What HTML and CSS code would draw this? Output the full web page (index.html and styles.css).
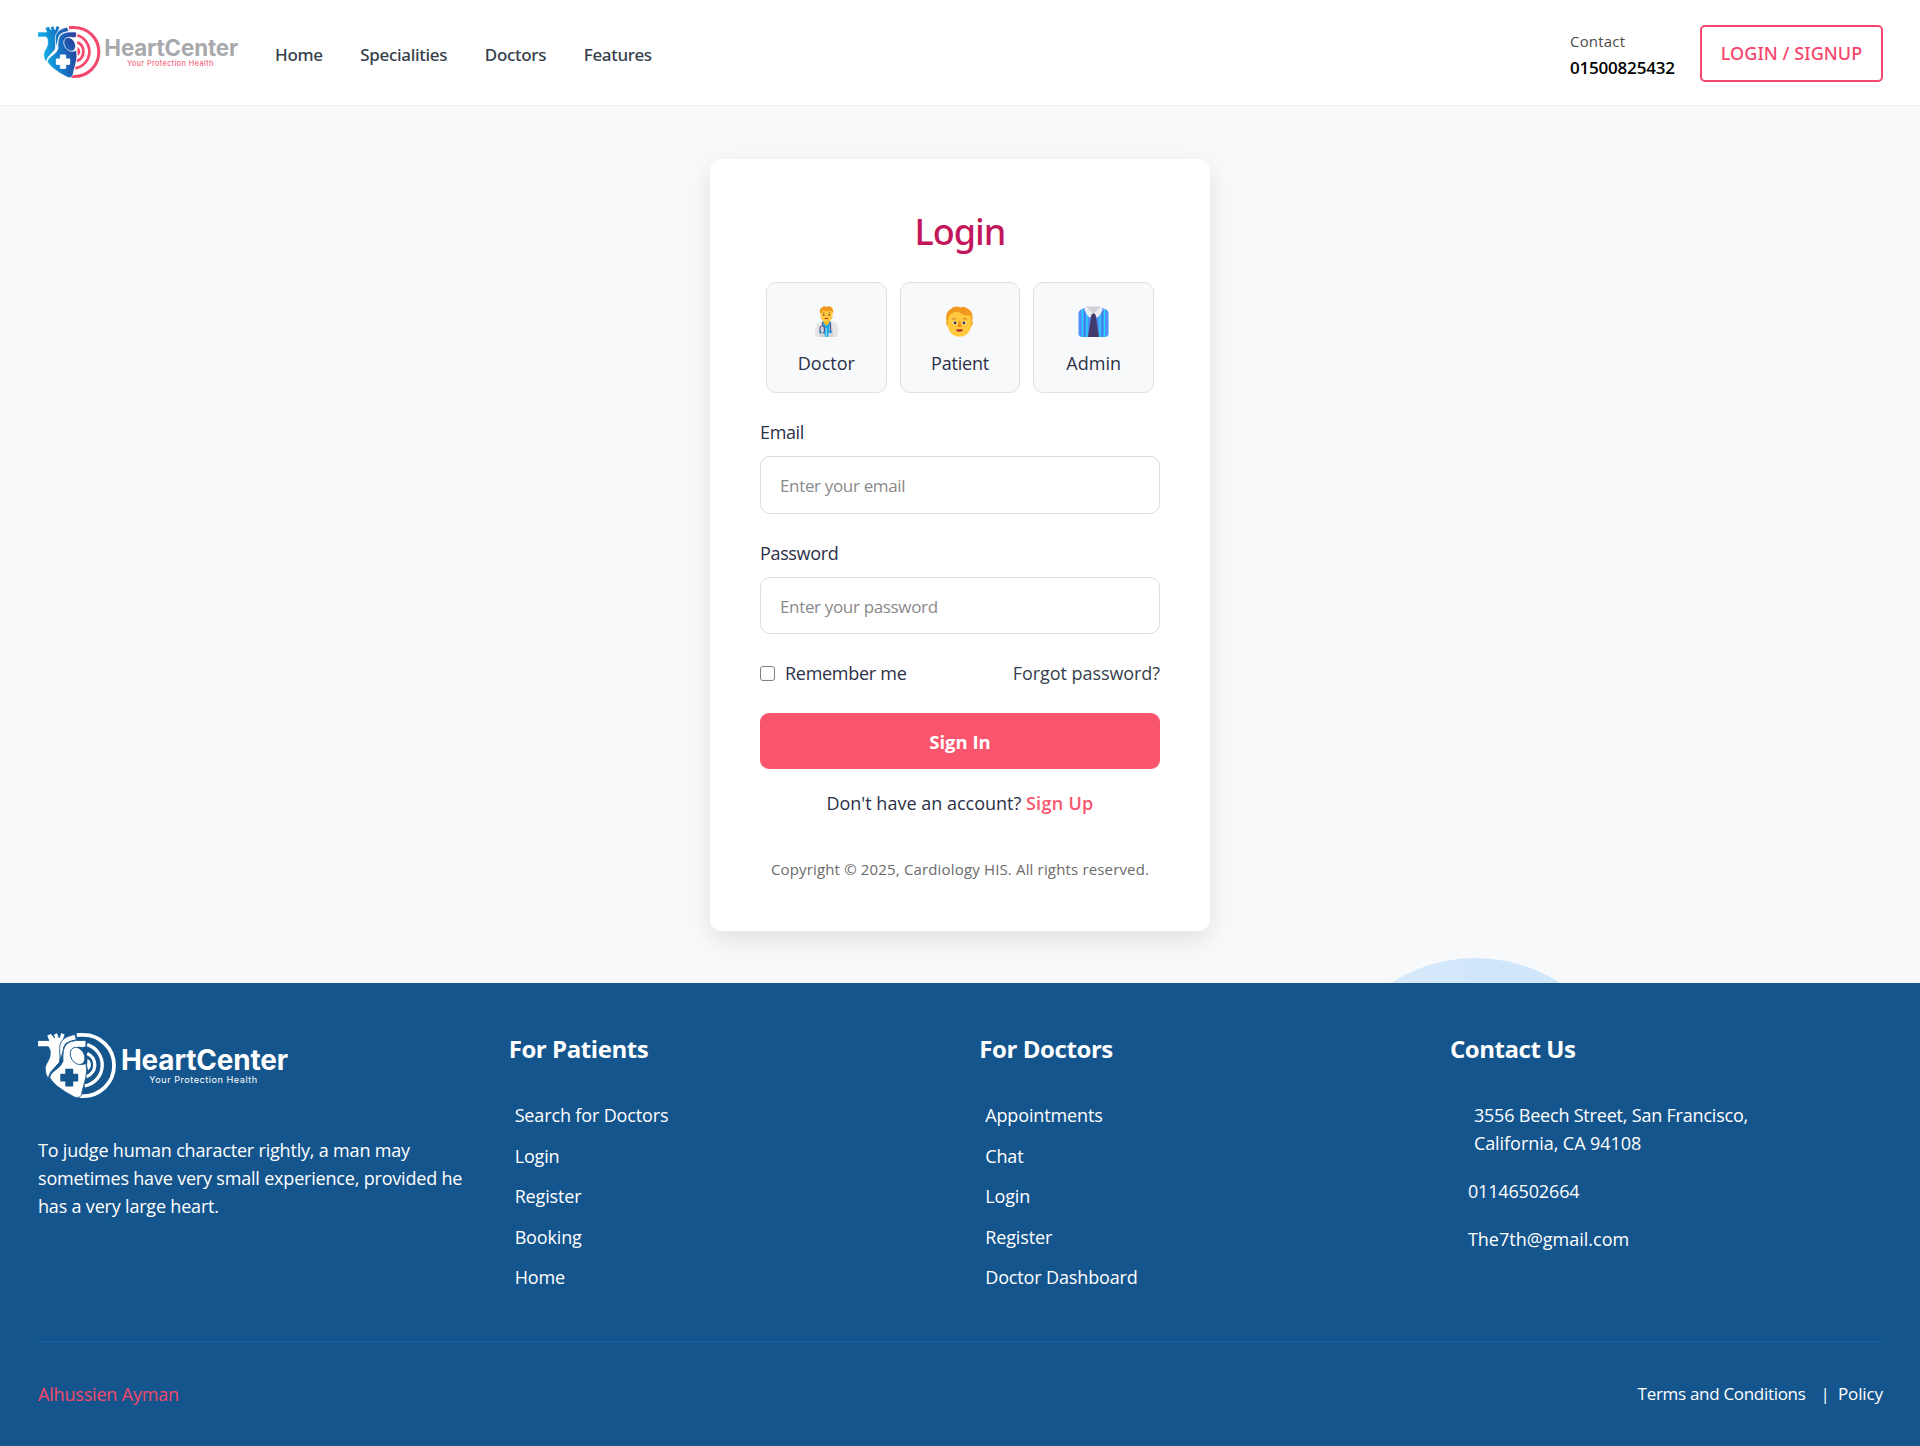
FILE: index.html
```
<!DOCTYPE html>
<html lang="en">
<head>
<meta charset="utf-8">
<title>HeartCenter - Login</title>
<link rel="stylesheet" href="styles.css">
</head>
<body>
<svg class="defs" width="0" height="0" aria-hidden="true">
  <defs>
    <linearGradient id="heart-blue" gradientUnits="userSpaceOnUse" x1="74" y1="130" x2="170" y2="112">
      <stop offset="0" stop-color="#0fa9e6"/>
      <stop offset=".5" stop-color="#1673c2"/>
      <stop offset="1" stop-color="#2a3f9d"/>
    </linearGradient>
    <symbol id="logo" viewBox="54 48 600 156">
      <g class="rings" fill="none">
        <path stroke-width="9" d="M147 53C152 52.500 158 52 163 52.500A73.500 73.500 0 0 1 163 199.500C160 199.500 157 199.500 154 199"/>
        <path stroke-width="8" d="M172 76A51 51 0 0 1 166 175"/>
        <path stroke-width="8" d="M172 97A30 30 0 0 1 170 153"/>
      </g>
      <path class="ring-core" d="M173 110Q182 117 181 126Q180 134 174 138Q170 124 173 110Z"/>
      <g class="heart">
        <path d="M53 66H80L75 54L85 49L94 60L91 52L100 47L105 60L109 47L119 51L114 66Q107 76 107 92Q108 110 105 119L84 142L78 157Q71 146 71 132Q73 122 79 114Q85 104 83 90L79 81H53Z"/>
        <path d="M108 72Q116 58 130 55L142 51L146 64Q128 67 120 74Q114 82 114 92L108 112Q104 84 108 72Z"/>
        <path d="M121 76Q130 67 146 66H169V81L160 83Q150 79 143 86Q138 94 141 106Q146 118 152 122Q160 126 169 121Q173 140 168 158Q161 182 158 198Q152 206 142 202Q118 190 98 174Q85 162 82 154Q84 146 92 140Q110 128 114 116Q112 88 121 76Z"/>
        <ellipse cx="149" cy="103" rx="16" ry="22" transform="rotate(-30 149 103)"/>
      </g>
      <path class="cross" d="M121 135h16v12h12v16h-12v12h-16v-12h-12v-16h12z"/>
      <text class="logo-name" x="253" y="137" textLength="401">HeartCenter</text>
      <text class="logo-tag" x="321" y="168" textLength="259">Your Protection Health</text>
    </symbol>
  </defs>
</svg>

<header class="header">
  <a class="brand"><svg class="logo logo-color" width="200" height="52"><use href="#logo"/></svg></a>
  <nav class="nav">
    <a>Home</a><a>Specialities</a><a>Doctors</a><a>Features</a>
  </nav>
  <div class="header-contact">
    <span class="contact-label">Contact</span>
    <span class="contact-phone">01500825432</span>
  </div>
  <a class="login-btn">LOGIN / SIGNUP</a>
</header>

<main class="main">
  <div class="bubble"></div>
  <form class="card">
    <h1 class="title">Login</h1>
    <div class="roles">
      <div class="role">
        <svg width="31" height="31" viewBox="0 0 31 31">
          <path fill="#e6e6e6" d="M4 31V23Q4 18 9 16L12 15H19L22 16Q27 18 27 23V31Z"/>
          <path fill="#d3d3d3" d="M9 31V26L11 17H20L22 26V31Z"/>
          <path fill="#0fa8e8" d="M11.500 15H19.500L17 31H14Z"/>
          <path fill="#fff" d="M14.800 22h.7v9h-.7z"/>
          <path fill="#f5b82e" d="M12.500 13h6v4l-3 3-3-3z"/>
          <path fill="#ffc83d" d="M9.500 5Q15.500 1 21.500 5V11Q20 15.500 15.500 16Q11 15.500 9.500 11Z"/>
          <path fill="#f29a1f" d="M9 7Q8 2 12 .700Q14 0 15.500.800Q18-.200 20 1Q23 2.500 22 7.500L20.500 5Q15 5.500 11.500 4.500L10 8Z"/>
          <path stroke="#a56434" stroke-width=".8" d="M11.500 7h2M17.500 7h2"/>
          <circle cx="12.800" cy="9" r=".8" fill="#35273c"/><circle cx="18.200" cy="9" r=".8" fill="#35273c"/>
          <path d="M13.700 12.500h3.500" stroke="#b13a30" stroke-width="1"/>
          <g fill="none" stroke="#635994" stroke-width="1.200">
            <path d="M11.500 16V20M9 26V22Q9 20 11.500 20Q13.500 20 13.500 22V26M19.500 16V24"/>
          </g>
          <path stroke="#208dd5" stroke-width="1.200" d="M9 25v2h1.500M13.500 25v2h-1.500"/>
          <circle cx="19.500" cy="25.500" r="1.500" fill="#208dd5"/>
        </svg>
        <span>Doctor</span>
      </div>
      <div class="role">
        <svg width="31" height="31" viewBox="0 0 31 31">
          <path fill="#f29a1f" d="M2.500 15Q1 7 6 3.500Q9 .500 13 .600Q15 .500 16 1.500Q20-.300 23.500 2.500Q29 5 28.500 13L27.500 16Z"/>
          <path fill="#f3ad28" d="M4 14Q2 14 2.200 17.500Q3 21 5 21ZM27 14Q29 14 28.800 17.500Q28 21 26 21Z"/>
          <path fill="#ffc83d" d="M4 14Q5 7 11 6Q15 5.500 18 8Q21 10 27 9.500V21Q25.500 28 19 30.300Q15.500 31.200 12 30.300Q5.500 28 4 21Z"/>
          <path fill="none" stroke="#c66a23" stroke-width=".8" d="M8 13.500q2-1.500 4-.6M19 12.900q2-.9 4 .6"/>
          <ellipse cx="10.700" cy="16.800" rx="2" ry="1.500" fill="#fff"/><ellipse cx="20.300" cy="16.800" rx="2" ry="1.500" fill="#fff"/>
          <circle cx="11" cy="16.800" r="1.400" fill="#35273c"/><circle cx="20" cy="16.800" r="1.400" fill="#35273c"/>
          <path fill="#f08e1d" d="M15 15h1.200l1.400 5.500q-2 1-4 0z"/>
          <path fill="#990838" d="M12 23.400h7q-.5 2.200-3.500 2.200t-3.500-2.200z"/>
        </svg>
        <span class="tight">Patient</span>
      </div>
      <div class="role">
        <svg width="31" height="31" viewBox="0 0 31 31">
          <path fill="#4f91fa" d="M8 1.500H23L28 3.500Q30.500 4.500 30.500 8V28Q30 31 27 31H4Q1 31 .500 28V8Q.500 4.500 3 3.500Z"/>
          <path stroke="#1ee0f8" stroke-width="1.200" d="M4.500 3.500V31M9 8V31M22 8V31M26.500 3.500V31"/>
          <path stroke="#2876d2" stroke-width=".7" d="M6.700 5V31M24.300 5V31"/>
          <path fill="#4f91fa" d="M11 11h2v20h-2zM18 11h2v20h-2z"/>
          <path fill="#d0d0d2" d="M8.500 .500H22.500L15.500 8.500Z"/>
          <path fill="#eeeef0" d="M8.500.500L15.500 8L12 11.500Q8.500 10 6.300 3ZM22.500.500L15.500 8L19 11.500Q22.500 10 24.700 3Z"/>
          <path fill="#433b6b" d="M13.500 8.500L15.500 7.300L17.500 8.500L18 11L21 31H10L13 11Z"/>
        </svg>
        <span>Admin</span>
      </div>
    </div>

    <label class="label" for="email">Email</label>
    <input class="input" id="email" type="email" placeholder="Enter your email">
    <label class="label" for="password">Password</label>
    <input class="input" id="password" type="password" placeholder="Enter your password">

    <div class="options">
      <label class="remember"><input class="check" type="checkbox">Remember me</label>
      <a>Forgot password?</a>
    </div>
    <button class="submit" type="button">Sign In</button>
    <p class="signup">Don't have an account? <a>Sign Up</a></p>
    <p class="copyright">Copyright © 2025, Cardiology HIS. All rights reserved.</p>
  </form>
</main>

<footer class="footer">
  <div class="columns">
    <section>
      <svg class="logo logo-white" width="250" height="65"><use href="#logo"/></svg>
      <p class="about">To judge human character rightly, a man may sometimes have very small experience, provided he has a very large heart.</p>
    </section>
    <section>
      <h2>For Patients</h2>
      <ul class="links">
        <li>Search for Doctors</li><li>Login</li><li>Register</li><li>Booking</li><li>Home</li>
      </ul>
    </section>
    <section>
      <h2>For Doctors</h2>
      <ul class="links">
        <li>Appointments</li><li>Chat</li><li>Login</li><li>Register</li><li>Doctor Dashboard</li>
      </ul>
    </section>
    <section>
      <h2>Contact Us</h2>
      <address class="contact">
        <p class="street">3556 Beech Street, San Francisco,<br><span class="city">California, CA 94108</span></p>
        <p class="phone">01146502664</p>
        <p class="mail">The7th@gmail.com</p>
      </address>
    </section>
  </div>
  <div class="bottom">
    <a class="author">Alhussien Ayman</a>
    <div class="legal"><a class="terms">Terms and Conditions</a><span>|</span><a>Policy</a></div>
  </div>
</footer>
</body>
</html>
```
FILE: styles.css
```
* { box-sizing: border-box; }
body {
  margin: 0;
  font: 18px/24px "Open Sans", "Noto Sans", sans-serif;
  color: #2c3048;
  background: #f8f9fb;
}
h1, h2, p, ul { margin: 0; padding: 0; }
ul { list-style: none; }
.defs { display: block; height: 0; }

/* Logo */
.logo { display: block; }
.logo-color { --ring: #f5476b; --heart: url(#heart-blue); --seam: #fff; --name: #a7a9ac; --tag: #f5476b; }
.logo-white { --ring: #fff; --heart: #fff; --seam: #15558d; --name: #fff; --tag: #fff; }
.rings { stroke: var(--ring); }
.ring-core { fill: var(--ring); }
.heart { fill: var(--heart); stroke: var(--seam); stroke-width: 2; }
.cross { fill: var(--seam); stroke: var(--seam); stroke-width: 3; stroke-linejoin: round; }
.logo-name { font: 700 67px "Inter", sans-serif; fill: var(--name); }
.logo-tag { font: 400 22px "Inter", sans-serif; fill: var(--tag); }

/* Header */
.header {
  display: flex;
  align-items: center;
  height: 106px;
  padding: 0 37px 0 38px;
  background: #fff;
  border-bottom: 1px solid #eceef0;
}
.brand { padding-bottom: 2px; }
.nav {
  display: flex;
  gap: 37.5px;
  flex: 1;
  margin-left: 37px;
  padding-top: 5px;
  font: 500 17px/24px "Noto Sans", sans-serif;
  letter-spacing: -.3px;
  color: #363f4b;
}
.header-contact { display: flex; flex-direction: column; gap: 3px; width: 130px; padding-top: 3px; }
.contact-label { font-size: 15px; letter-spacing: .2px; color: #4d4d4d; }
.contact-phone { font-size: 17px; font-weight: 600; letter-spacing: -.2px; color: #000; }
.login-btn {
  width: 183px;
  height: 57px;
  margin-top: 2px;
  border: 2px solid #f5476b;
  border-radius: 5px;
  font: 500 18px/53px "Noto Sans", sans-serif;
  letter-spacing: .05px;
  text-align: center;
  color: #f5476b;
}

/* Login card */
.main { position: relative; padding: 53px 0 52px; overflow: hidden; }
.bubble {
  position: absolute;
  left: 1320px;
  top: 852px;
  width: 311px;
  height: 311px;
  border-radius: 50%;
  background: linear-gradient(70deg, #e4f0fa 0%, #d0e6fb 65%);
}
.card {
  position: relative;
  width: 500px;
  height: 772px;
  margin: 0 auto;
  padding: 49px 50px 0;
  background: #fff;
  border-radius: 12px;
  box-shadow: 0 8px 24px rgba(0, 0, 0, .1);
}
.title {
  font: 500 36px/48px "Noto Sans", sans-serif;
  letter-spacing: -1px;
  text-align: center;
  color: #c2185b;
}
.roles { display: grid; grid-template-columns: repeat(3, 1fr); gap: 13px; margin: 26px 6px 27px; }
.role {
  display: flex;
  flex-direction: column;
  align-items: center;
  gap: 14px;
  height: 111px;
  padding-top: 23px;
  background: #f8f9fb;
  border: 1px solid #dfe0e1;
  border-radius: 10px;
}
.role svg { display: block; }
.tight { letter-spacing: -.2px; }
.label { display: block; letter-spacing: -.35px; }
.input {
  display: block;
  width: 100%;
  height: 57.5px;
  margin: 12px 0 27px;
  padding: 2px 19px 0;
  border: 1px solid #dcdcdc;
  border-radius: 10px;
  background: #fff;
  font: 17px "Open Sans", sans-serif;
  letter-spacing: -.34px;
}
.input::placeholder { color: #8a8a8a; }
.options { display: flex; justify-content: space-between; }
.options a { letter-spacing: -.07px; color: #363f4b; }
.remember { display: flex; align-items: center; letter-spacing: -.28px; }
.check {
  appearance: none;
  width: 15px;
  height: 15px;
  margin: 0 10px 0 0;
  border: 1.500px solid #808080;
  border-radius: 3px;
  background: #fff;
}
.submit {
  display: block;
  width: 100%;
  height: 56px;
  margin: 27.5px 0 22px;
  padding: 2px 0 0;
  border: 0;
  border-radius: 9px;
  background: #f9566d;
  color: #fff;
  font: 700 18.5px "Open Sans", sans-serif;
}
.signup { text-align: center; }
.signup a { font-weight: 600; letter-spacing: .3px; color: #f9566d; }
.copyright { margin-top: 44px; font-size: 15px; line-height: 20px; letter-spacing: .16px; text-align: center; color: #6b6b6b; }

/* Footer */
.footer { position: relative; height: 463px; padding: 50px 37px 0 38px; line-height: 28px; background: #15558d; color: #fff; }
.columns { display: grid; grid-template-columns: repeat(4, 1fr); gap: 37.5px; height: 308px; }
.about { margin-top: 38px; letter-spacing: -.19px; }
.footer h2 { margin-bottom: 36px; font-size: 24px; line-height: 32px; letter-spacing: -.42px; }
.links { display: flex; flex-direction: column; gap: 12.5px; padding-left: 6px; letter-spacing: -.14px; }
.contact { display: flex; flex-direction: column; gap: 20px; padding-left: 18px; font-style: normal; }
.street { padding-left: 6px; letter-spacing: -.2px; }
.city { letter-spacing: -.05px; }
.phone { letter-spacing: -.15px; }
.bottom {
  display: flex;
  justify-content: space-between;
  padding-top: 38px;
  border-top: 1px solid #1b639f;
}
.author { letter-spacing: -.18px; color: #f5476b; }
.legal { display: flex; font-size: 17px; }
.legal span { margin: 0 8px 0 15px; }
.legal a { letter-spacing: -.1px; }
.legal .terms { letter-spacing: -.3px; }
```
